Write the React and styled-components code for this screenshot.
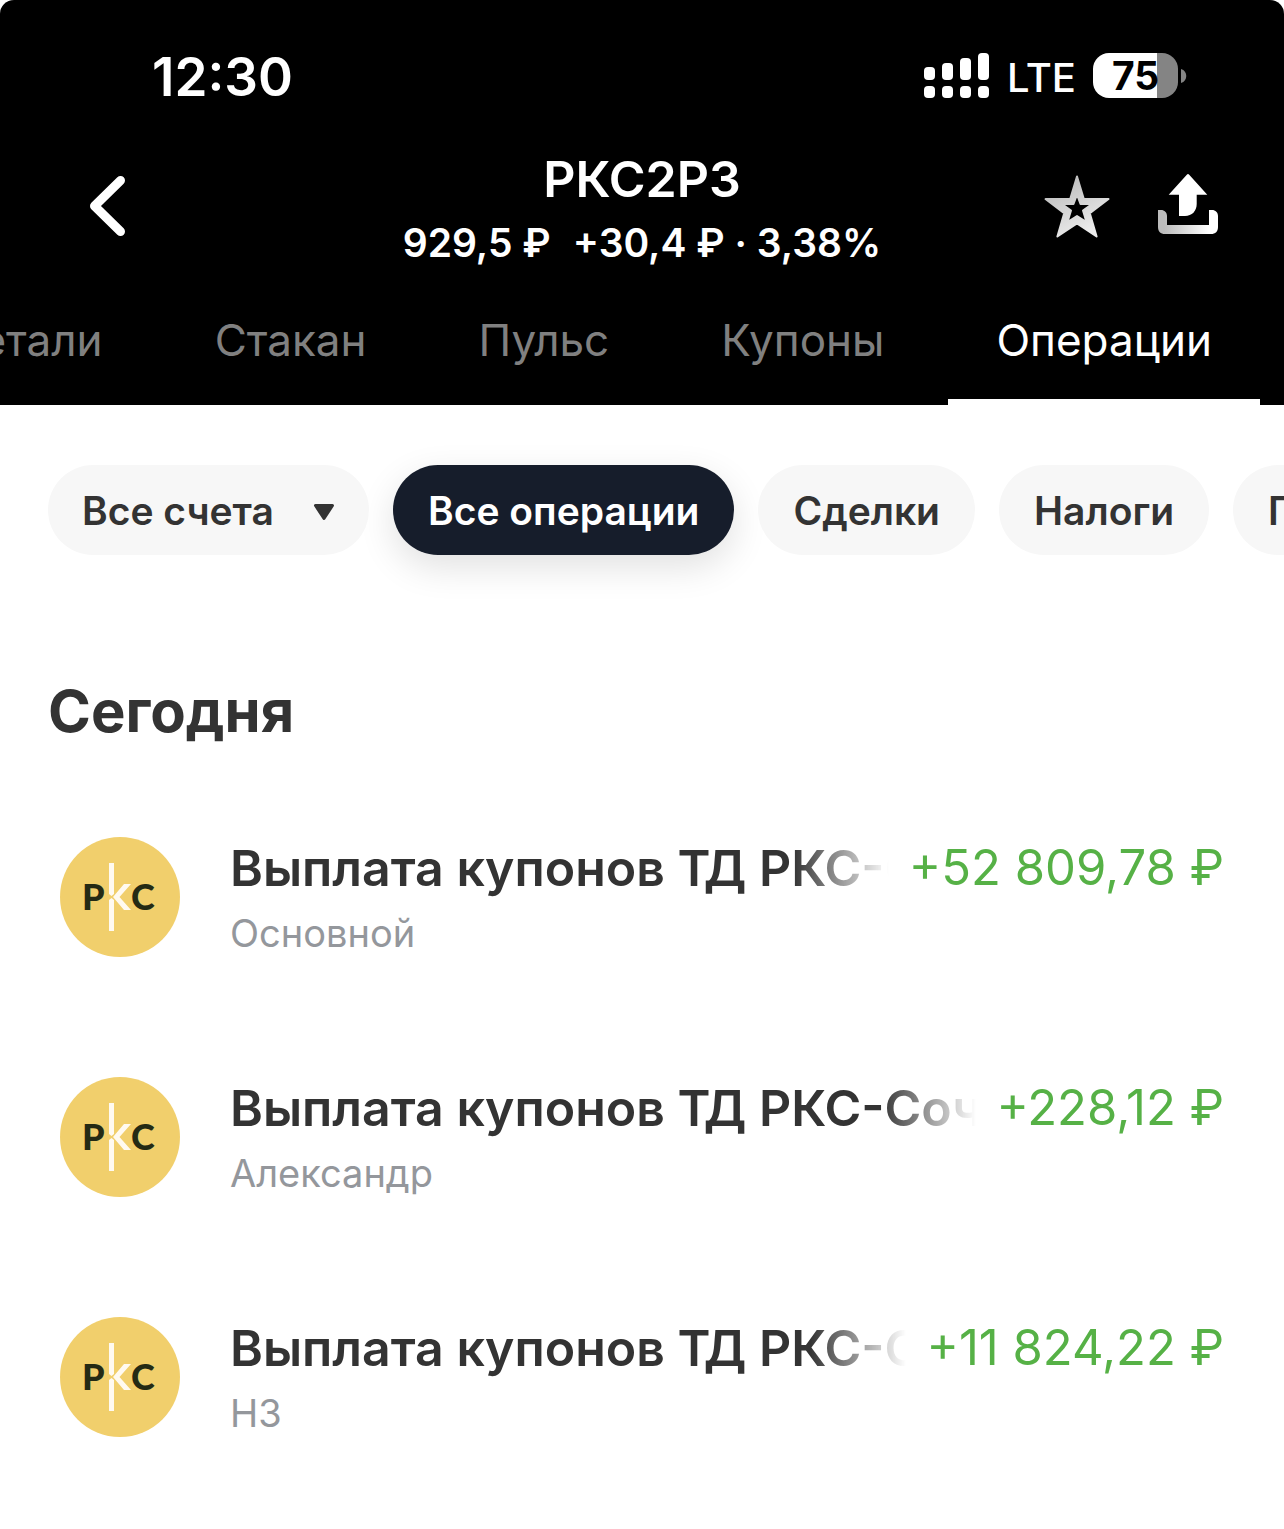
import React, { useState } from "react";
import styled, { createGlobalStyle } from "styled-components";

const GlobalStyle = createGlobalStyle`
  *, *::before, *::after {
    box-sizing: border-box;
  }

  html, body {
    margin: 0;
    padding: 0;
    background-color: #ffffff;
  }

  body, button, select {
    font-family: Inter, "Liberation Sans", sans-serif;
  }
`;

const Page = styled.div`
  overflow: hidden;
  color: #333333;
  background-color: #ffffff;
`;

const Header = styled.header`
  color: #ffffff;
  background-color: #000000;
  border-radius: 14px 14px 0 0;
`;

const StatusBar = styled.div`
  display: flex;
  justify-content: space-between;
  align-items: flex-start;
  padding: 45px 97px 0 152px;
`;

const Clock = styled.time`
  font-size: 53px;
  line-height: 64px;
  font-weight: 600;
`;

const StatusIcons = styled.div`
  display: flex;
  align-items: flex-end;
  gap: 17px;
  padding-top: 8px;
`;

const Network = styled.span`
  font-size: 40px;
  line-height: 40px;
  font-weight: 500;
`;

const Battery = styled.div`
  display: flex;
  align-items: center;
  gap: 3px;
`;

const BatteryLevel = styled.span`
  width: 85px;
  border-radius: 16px;
  color: #000000;
  background: linear-gradient(to right, #ffffff 75%, #848484 75%);
  font-size: 39px;
  line-height: 45px;
  font-weight: 700;
  text-align: center;
`;

const TitleBar = styled.div`
  display: grid;
  grid-template-columns: 1fr auto 1fr;
  align-items: center;
  padding: 40px 66px 0;
`;

const IconButton = styled.button`
  display: flex;
  padding: 0;
  border: none;
  background: none;
  color: inherit;
  cursor: pointer;
`;

const Instrument = styled.div`
  display: flex;
  flex-direction: column;
  align-items: center;
  gap: 14px;
`;

const Ticker = styled.h1`
  margin: 0;
  font-size: 50px;
  line-height: 60px;
  font-weight: 600;
`;

const Quote = styled.p`
  display: flex;
  gap: 22px;
  margin: 0;
  font-size: 39px;
  line-height: 40px;
  font-weight: 600;
  white-space: nowrap;
`;

const Actions = styled.div`
  display: flex;
  justify-content: flex-end;
  align-items: center;
  gap: 48px;
`;

const Tabs = styled.nav`
  display: flex;
  justify-content: flex-end;
  gap: 16px;
  padding-right: 24px;
  margin-top: 43px;
  overflow: hidden;
`;

const Tab = styled.a`
  flex: none;
  padding: 4px 48px 29px;
  border-bottom: 6px solid ${(props) => (props.$active ? "#ffffff" : "transparent")};
  color: ${(props) => (props.$active ? "#ffffff" : "#808080")};
  font-size: 44px;
  line-height: 60px;
  text-decoration: none;
`;

const Filters = styled.div`
  display: flex;
  gap: 24px;
  padding: 60px 0 60px 48px;
  overflow: hidden;
`;

const Chip = styled.button`
  flex: none;
  height: 90px;
  padding: 0 35px;
  border: none;
  border-radius: 45px;
  color: ${(props) => (props.$active ? "#ffffff" : "#333333")};
  background-color: ${(props) => (props.$active ? "#161d2b" : "#f7f7f7")};
  box-shadow: ${(props) => (props.$active ? "0 12px 36px rgba(0, 0, 0, 0.12)" : "none")};
  font-size: 39px;
  font-weight: 600;
  cursor: pointer;
`;

const AccountFilter = styled.label`
  position: relative;
  flex: none;
  color: #333333;
`;

const AccountSelect = styled.select`
  height: 90px;
  width: 321px;
  padding: 0 34px;
  border: none;
  border-radius: 45px;
  appearance: none;
  color: inherit;
  background-color: #f7f7f7;
  font-size: 39px;
  font-weight: 600;
  cursor: pointer;
`;

const SelectArrow = styled.svg`
  position: absolute;
  right: 34px;
  top: 38px;
  pointer-events: none;
`;

const Day = styled.h2`
  margin: 0;
  padding: 60px 48px 30px;
  font-size: 58px;
  line-height: 72px;
  font-weight: 700;
`;

const Operations = styled.ul`
  margin: 0;
  padding: 0 60px 32px;
  list-style: none;
`;

const Operation = styled.li`
  display: flex;
  align-items: flex-start;
  gap: 50px;
  padding: 60px 0 54px;
`;

const Avatar = styled.svg`
  flex: none;
  border-radius: 50%;
  background-color: #f1cf6c;
`;

const Details = styled.div`
  flex: 1;
  min-width: 0;
`;

const TopLine = styled.div`
  display: flex;
  gap: 20px;
  line-height: 62px;
  white-space: nowrap;
`;

const OperationTitle = styled.div`
  flex: 1;
  min-width: 0;
  overflow: hidden;
  font-size: 50px;
  font-weight: 600;
  mask-image: linear-gradient(to left, transparent, #000000 96px);
`;

const Amount = styled.div`
  color: #56b146;
  font-size: 49px;
`;

const Account = styled.div`
  padding-top: 4px;
  color: #94979c;
  font-size: 38px;
  line-height: 60px;
`;

const tabs = ["Детали", "Стакан", "Пульс", "Купоны", "Операции"];

const filters = ["Все операции", "Сделки", "Налоги", "Пополнения"];

const accounts = ["Все счета", "Основной", "Александр", "НЗ"];

const operations = [
  { id: 1, account: "Основной", amount: "+52 809,78 ₽" },
  { id: 2, account: "Александр", amount: "+228,12 ₽" },
  { id: 3, account: "НЗ", amount: "+11 824,22 ₽" },
];

function SignalIcon() {
  const tops = [14, 10, 5, 0];
  return (
    <svg width="66" height="45" viewBox="0 0 66 45" fill="#ffffff" aria-hidden="true">
      {tops.map((top, i) => (
        <g key={top}>
          <rect x={i * 18} y={top} width="11" height={27 - top} rx="4" />
          <rect x={i * 18} y="33" width="11" height="12" rx="4" />
        </g>
      ))}
    </svg>
  );
}

function BackIcon() {
  return (
    <svg width="70" height="64" viewBox="-14 0 70 64" fill="none" aria-hidden="true">
      <path
        d="M40.5 6.5 14.5 32l26 25.500"
        stroke="#ffffff"
        strokeWidth="9"
        strokeLinecap="round"
        strokeLinejoin="round"
      />
    </svg>
  );
}

function StarIcon() {
  return (
    <svg width="66" height="64" viewBox="0 -1 66 64" aria-hidden="true">
      <defs>
        <linearGradient id="star" x1="0" y1="0" x2="0.5" y2="1">
          <stop offset="0" stopColor="#b4b4b4" />
          <stop offset="1" stopColor="#ececec" />
        </linearGradient>
      </defs>
      <path
        fill="url(#star)"
        stroke="url(#star)"
        strokeWidth="2"
        strokeLinejoin="round"
        fillRule="evenodd"
        d="M33 1.500 39.800 24H64.500L45.800 38.300 52.600 61.500 33 48.500 13.400 61.500 20.200 38.300 1.500 24H26.200Z
           M33 19.500 29.500 29H18L27 35.500 23.500 47 33 41 42.500 47 39 35.500 48 29H36.500Z"
      />
    </svg>
  );
}

function ShareIcon() {
  return (
    <svg width="60" height="64" viewBox="0 0 60 64" aria-hidden="true">
      <defs>
        <linearGradient id="tray" x1="0" y1="0" x2="1" y2="0">
          <stop offset="0.100" stopColor="#bcbcbc" />
          <stop offset="0.850" stopColor="#ffffff" />
        </linearGradient>
      </defs>
      <path
        fill="#ffffff"
        d="M28.800.700a1.700 1.700 0 0 1 2.400 0L49.300 20.800H38.700V30C38.700 37 34 42 27 42H21V20.800H10.700Z"
      />
      <path
        fill="url(#tray)"
        d="M0 36H3C6.500 36 9 38.500 9 42V51H51V36H54C57.500 36 60 38.500 60 42V53C60 57.500 57.500 60 53 60H7C2.500 60 0 57.500 0 53Z"
      />
    </svg>
  );
}

function CompanyLogo() {
  return (
    <Avatar width="120" height="120" viewBox="0 0 120 120" role="img" aria-label="РКС">
      <g fill="#242a14" fontFamily='Lato, "Open Sans", sans-serif' fontSize="36" fontWeight="900">
        <text x="22" y="73">Р</text>
        <text x="71" y="73">С</text>
      </g>
      <g fill="#fffaf0">
        <path d="M49 26H54V57L51.500 59 49 57Z" />
        <path d="M49 63 51.500 61 54 63V94H49Z" />
        <path d="M64 47H71L59.500 60 71 73H64L53 60Z" />
      </g>
    </Avatar>
  );
}

export default function App() {
  const [activeTab, setActiveTab] = useState("Операции");
  const [activeFilter, setActiveFilter] = useState("Все операции");

  return (
    <Page>
      <GlobalStyle />
      <Header>
        <StatusBar>
          <Clock>12:30</Clock>
          <StatusIcons>
            <SignalIcon />
            <Network>LTE</Network>
            <Battery>
              <BatteryLevel>75</BatteryLevel>
              <svg width="6" height="16" viewBox="0 0 6 16" aria-hidden="true">
                <path d="M0 1C7 3 7 13 0 15Z" fill="#848484" />
              </svg>
            </Battery>
          </StatusIcons>
        </StatusBar>
        <TitleBar>
          <IconButton aria-label="Назад">
            <BackIcon />
          </IconButton>
          <Instrument>
            <Ticker>РКС2Р3</Ticker>
            <Quote>
              <span>929,5 ₽</span>
              <span>+30,4 ₽ · 3,38%</span>
            </Quote>
          </Instrument>
          <Actions>
            <IconButton aria-label="В избранное">
              <StarIcon />
            </IconButton>
            <IconButton aria-label="Поделиться">
              <ShareIcon />
            </IconButton>
          </Actions>
        </TitleBar>
        <Tabs>
          {tabs.map((tab) => (
            <Tab
              key={tab}
              href="#"
              $active={tab === activeTab}
              onClick={() => setActiveTab(tab)}
            >
              {tab}
            </Tab>
          ))}
        </Tabs>
      </Header>
      <main>
        <Filters>
          <AccountFilter>
            <AccountSelect aria-label="Счет">
              {accounts.map((account) => (
                <option key={account}>{account}</option>
              ))}
            </AccountSelect>
            <SelectArrow width="22" height="18" viewBox="0 0 22 18" aria-hidden="true">
              <path
                d="M2.500 2.500H19.500L11 15.500Z"
                fill="currentColor"
                stroke="currentColor"
                strokeWidth="3"
                strokeLinejoin="round"
              />
            </SelectArrow>
          </AccountFilter>
          {filters.map((filter) => (
            <Chip
              key={filter}
              $active={filter === activeFilter}
              onClick={() => setActiveFilter(filter)}
            >
              {filter}
            </Chip>
          ))}
        </Filters>
        <Day>Сегодня</Day>
        <Operations>
          {operations.map((operation) => (
            <Operation key={operation.id}>
              <CompanyLogo />
              <Details>
                <TopLine>
                  <OperationTitle>Выплата купонов ТД РКС-Сочи</OperationTitle>
                  <Amount>{operation.amount}</Amount>
                </TopLine>
                <Account>{operation.account}</Account>
              </Details>
            </Operation>
          ))}
        </Operations>
      </main>
    </Page>
  );
}
